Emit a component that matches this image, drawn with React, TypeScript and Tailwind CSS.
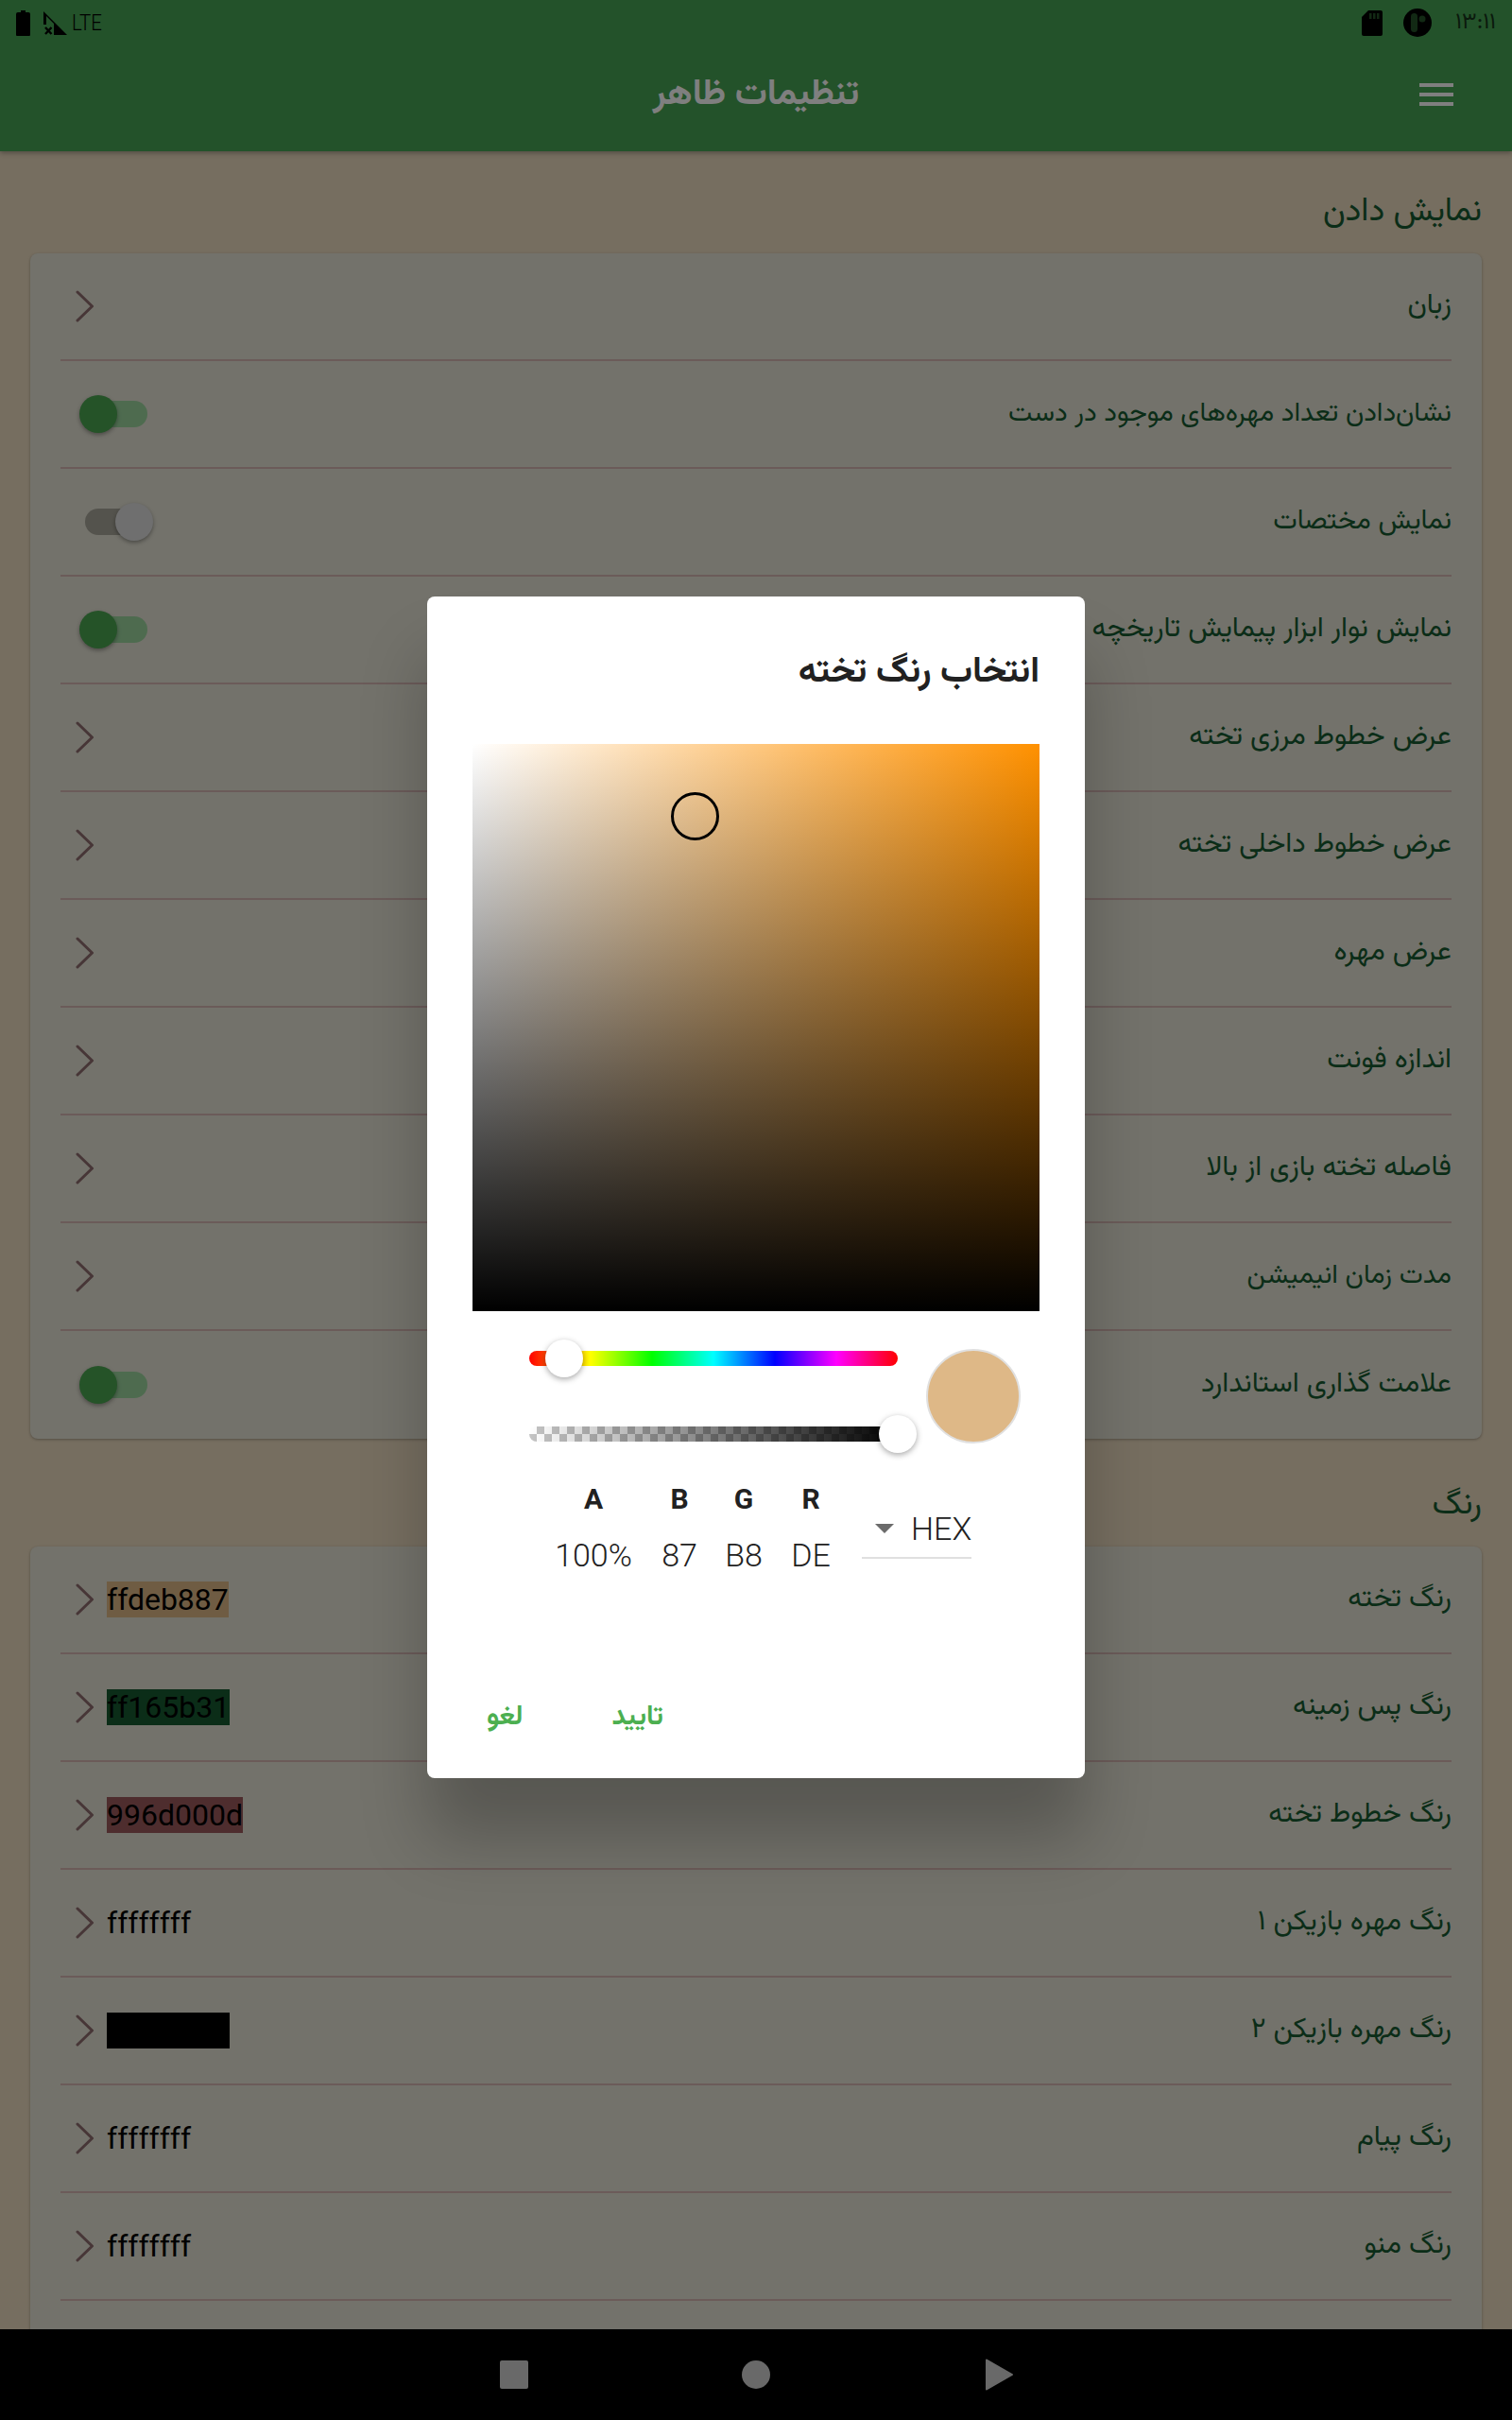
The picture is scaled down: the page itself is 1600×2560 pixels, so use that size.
import React from "react";

const fa = "font-['Vazirmatn','DejaVu_Sans','Noto_Sans',sans-serif]";

type Base = { label: string; size?: string };
type Row =
  | (Base & { kind: "chev" })
  | (Base & { kind: "on" | "off" })
  | (Base & { kind: "value"; value: string; bg?: string });

const display: Row[] = [
  { label: "زبان", kind: "chev" },
  { label: "نشان‌دادن تعداد مهره‌های موجود در دست", kind: "on", size: "text-[28.5px]" },
  { label: "نمایش مختصات", kind: "off", size: "text-[29px]" },
  { label: "نمایش نوار ابزار پیمایش تاریخچه", kind: "on" },
  { label: "عرض خطوط مرزی تخته", kind: "chev" },
  { label: "عرض خطوط داخلی تخته", kind: "chev" },
  { label: "عرض مهره", kind: "chev" },
  { label: "اندازه فونت", kind: "chev" },
  { label: "فاصله تخته بازی از بالا", kind: "chev" },
  { label: "مدت زمان انیمیشن", kind: "chev", size: "text-[28.5px]" },
  { label: "علامت گذاری استاندارد", kind: "on" },
];

const colors: Row[] = [
  { label: "رنگ تخته", kind: "value", value: "ffdeb887", bg: "bg-[#deb887]" },
  { label: "رنگ پس زمینه", kind: "value", value: "ff165b31", bg: "bg-[#165b31]" },
  { label: "رنگ خطوط تخته", kind: "value", value: "996d000d", bg: "bg-[#9d5b5d]" },
  { label: "رنگ مهره بازیکن ۱", kind: "value", value: "ffffffff" },
  { label: "رنگ مهره بازیکن ۲", kind: "value", value: "ff000000", bg: "bg-black" },
  { label: "رنگ پیام", kind: "value", value: "ffffffff" },
  { label: "رنگ منو", kind: "value", value: "ffffffff" },
];

function Chevron() {
  return (
    <svg width="20" height="34" viewBox="0 0 20 34" className="shrink-0" fill="none">
      <path d="M2 2 L17.5 17 L2 32" stroke="#8e6c6e" strokeWidth="3" strokeLinecap="round" strokeLinejoin="round" />
    </svg>
  );
}

function Toggle({ on }: { on: boolean }) {
  return (
    <div className="relative ml-[26px] h-[28px] w-[66px] shrink-0">
      <div className={`h-full w-full rounded-full ${on ? "bg-[#9cd69f]" : "bg-[#a8a69a]"}`} />
      <div
        className={`absolute top-[-6px] h-[40px] w-[40px] rounded-full shadow-[0_2px_4px_rgba(0,0,0,0.35)] ${
          on ? "left-[-6px] bg-[#4aa650]" : "right-[-6px] bg-[#dedede]"
        }`}
      />
    </div>
  );
}

function SettingRow({ row, last }: { row: Row; last: boolean }) {
  return (
    <div className={`flex h-[114px] items-center justify-between ${last ? "" : "border-b-2 border-[#d6b6b2]"}`}>
      <div className="flex items-center">
        {row.kind === "chev" && (
          <div className="ml-[16px]">
            <Chevron />
          </div>
        )}
        {(row.kind === "on" || row.kind === "off") && <Toggle on={row.kind === "on"} />}
        {row.kind === "value" && (
          <>
            <div className="ml-[16px]">
              <Chevron />
            </div>
            <span className={`ml-[13px] font-['Roboto',sans-serif] text-[32px] leading-[38px] text-black ${row.bg ?? ""}`}>
              {row.value}
            </span>
          </>
        )}
      </div>
      <span dir="rtl" className={`${fa} ${row.size ?? "text-[30px]"} leading-[40px] text-[#165b31]`}>
        {row.label}
      </span>
    </div>
  );
}

function Section({
  title,
  rows,
  top,
  lastBorder,
}: {
  title: string;
  rows: Row[];
  top: string;
  lastBorder?: boolean;
}) {
  return (
    <section className="px-[32px]">
      <div dir="rtl" className={`${top} flex items-center ${fa} text-[35px] leading-[48px] text-[#165b31]`}>
        {title}
      </div>
      <div className="rounded-[8px] bg-[#e6e4d6] px-[32px] shadow-[0_1px_3px_rgba(0,0,0,0.3)]">
        {rows.map((r, i) => (
          <SettingRow key={i} row={r} last={!lastBorder && i === rows.length - 1} />
        ))}
        {lastBorder && <div className="h-[60px]" />}
      </div>
    </section>
  );
}

function StatusLeft() {
  return (
    <div className="flex items-center">
      <svg width="15" height="27" viewBox="0 0 15 27" className="ml-[17px]">
        <path d="M5 0h5v2h3a2 2 0 0 1 2 2v22a1 1 0 0 1-1 1H1a1 1 0 0 1-1-1V4a2 2 0 0 1 2-2h3z" fill="#000" />
      </svg>
      <svg width="25" height="25" viewBox="0 0 25 25" className="ml-[14px]">
        <path d="M0 0 L25 25 H11 V13 L3 5 V14 H0 Z" fill="#000" />
        <path d="M2 17l6.500 7M8.500 17l-6.500 7" stroke="#000" strokeWidth="2.4" />
      </svg>
      <span className="ml-[5px] origin-left font-['Roboto',sans-serif] text-[24px] font-light leading-[28px] text-black [transform:scaleX(0.85)]">
        LTE
      </span>
    </div>
  );
}

function StatusRight() {
  return (
    <div className="flex items-center">
      <svg width="22" height="27" viewBox="0 0 22 27">
        <path d="M7 0h13a2 2 0 0 1 2 2v23a2 2 0 0 1-2 2H2a2 2 0 0 1-2-2V7z" fill="#000" />
        <path d="M8 3h2.500v6H8zM12 3h2.500v6H12zM16 3h2.500v6H16z" fill="#245228" />
      </svg>
      <svg width="30" height="30" viewBox="0 0 30 30" className="ml-[22px]">
        <circle cx="15" cy="15" r="15" fill="#000" />
        <rect x="8" y="5" width="7" height="20" rx="3.500" fill="#245228" />
        <circle cx="20" cy="11" r="3.500" fill="#245228" />
      </svg>
      <span dir="rtl" className={`ml-[25px] mr-[17px] ${fa} text-[24px] leading-[28px] text-black/70`}>
        ۱۳:۱۱
      </span>
    </div>
  );
}

function Channel({ label, value, w, ml }: { label: string; value: string; w: string; ml: string }) {
  return (
    <div className={`flex ${w} ${ml} flex-col items-center`}>
      <span className="text-[30px] font-bold leading-[36px]">{label}</span>
      <span className="mt-[23px] text-[34px] font-light leading-[36px]">{value}</span>
    </div>
  );
}

function PickerDialog() {
  return (
    <div className="flex h-[1250px] w-[696px] flex-col rounded-[8px] bg-white shadow-[0_64px_70px_rgba(0,0,0,0.24)]">
      <h2 dir="rtl" className={`flex h-[156px] items-center px-[48px] pt-[6px] ${fa} text-[38px] font-bold leading-[48px] text-[#212121]`}>
        انتخاب رنگ تخته
      </h2>

      <div className="relative mx-[48px] h-[600px] w-[600px] bg-[linear-gradient(to_bottom,transparent,#000),linear-gradient(to_right,#fff,#ff9100)]">
        <div className="absolute left-[210px] top-[51px] h-[51px] w-[51px] rounded-full border-[3px] border-black" />
      </div>

      <div className="flex items-center pl-[108px] pt-[40px]">
        <div className="flex w-[390px] flex-col gap-[64px]">
          <div className="relative h-[16px] rounded-full bg-[linear-gradient(to_right,#f00,#ff0,#0f0,#0ff,#00f,#f0f,#f00)]">
            <div className="absolute left-[17px] top-[-12px] h-[40px] w-[40px] rounded-full bg-white shadow-[0_2px_6px_rgba(0,0,0,0.35)]" />
          </div>
          <div className="relative h-[16px] rounded-l-full [background:linear-gradient(to_right,transparent,#000),repeating-conic-gradient(#c4c4c4_0_25%,#fff_0_50%)_0_0/16px_16px]">
            <div className="absolute right-[-20px] top-[-12px] h-[40px] w-[40px] rounded-full bg-white shadow-[0_2px_6px_rgba(0,0,0,0.35)]" />
          </div>
        </div>
        <div className="ml-[30px] h-[100px] w-[100px] rounded-full border-2 border-[#e0e0e0] bg-[#deb887]" />
      </div>

      <div className="flex items-start pl-[136px] pt-[41px] font-['Roboto',sans-serif] text-[#212121]">
        <Channel label="A" value="100%" w="w-[80px]" ml="ml-0" />
        <Channel label="B" value="87" w="w-[40px]" ml="ml-[31px]" />
        <Channel label="G" value="B8" w="w-[44px]" ml="ml-[26px]" />
        <Channel label="R" value="DE" w="w-[46px]" ml="ml-[26px]" />
        <div className="ml-[31px] mt-[19px] flex h-[62px] w-[116px] items-center border-b-2 border-[#e0e0e0] pl-[14px]">
          <div className="h-0 w-0 border-x-[10px] border-t-[10px] border-x-transparent border-t-[#6b6b6b]" />
          <span className="ml-[18px] text-[34px] font-light leading-[38px]">HEX</span>
        </div>
      </div>

      <div className={`mt-auto flex h-[128px] items-start pl-[63px] pt-[44px] ${fa} text-[29px] font-bold leading-[40px] text-[#4caf50]`}>
        <span>لغو</span>
        <span className="ml-[94px]">تایید</span>
      </div>
    </div>
  );
}

export default function App() {
  return (
    <div className="relative flex h-[2560px] w-[1600px] flex-col overflow-hidden bg-black">
      <div className="relative flex min-h-0 flex-1 flex-col overflow-hidden bg-[#ecdcc0]">
        <header className="z-10 h-[160px] shrink-0 bg-[#47a554] shadow-[0_2px_5px_rgba(0,0,0,0.3)]">
          <div className="flex h-[48px] items-center justify-between">
            <StatusLeft />
            <StatusRight />
          </div>
          <div className="relative flex h-[100px] items-center justify-center">
            <h1 dir="rtl" className={`${fa} pt-[6px] text-[38px] font-bold leading-[48px] text-white`}>
              تنظیمات ظاهر
            </h1>
            <div className="absolute right-[62px] top-[40px] flex h-[24px] w-[36px] flex-col justify-between">
              <div className="h-[4px] bg-white" />
              <div className="h-[4px] bg-white" />
              <div className="h-[4px] bg-white" />
            </div>
          </div>
        </header>
        <Section title="نمایش دادن" rows={display} top="h-[108px] pt-[22px]" />
        <Section title="رنگ" rows={colors} top="h-[114px] pt-[28px]" lastBorder />

        <div className="absolute inset-0 z-20 bg-black/50">
          <div className="flex justify-center pt-[631px]">
            <PickerDialog />
          </div>
        </div>
      </div>
      <nav className="flex h-[96px] shrink-0 items-center justify-center bg-black pl-[2px]">
        <div className="h-[30px] w-[30px] rounded-[2px] bg-[#696969]" />
        <div className="ml-[226px] h-[30px] w-[30px] rounded-full bg-[#696969]" />
        <svg width="30" height="34" viewBox="0 0 30 34" className="ml-[228px]">
          <path d="M1 1.500 L28 17 L1 32.500 Z" fill="#696969" stroke="#696969" strokeWidth="2" strokeLinejoin="round" />
        </svg>
      </nav>
    </div>
  );
}
